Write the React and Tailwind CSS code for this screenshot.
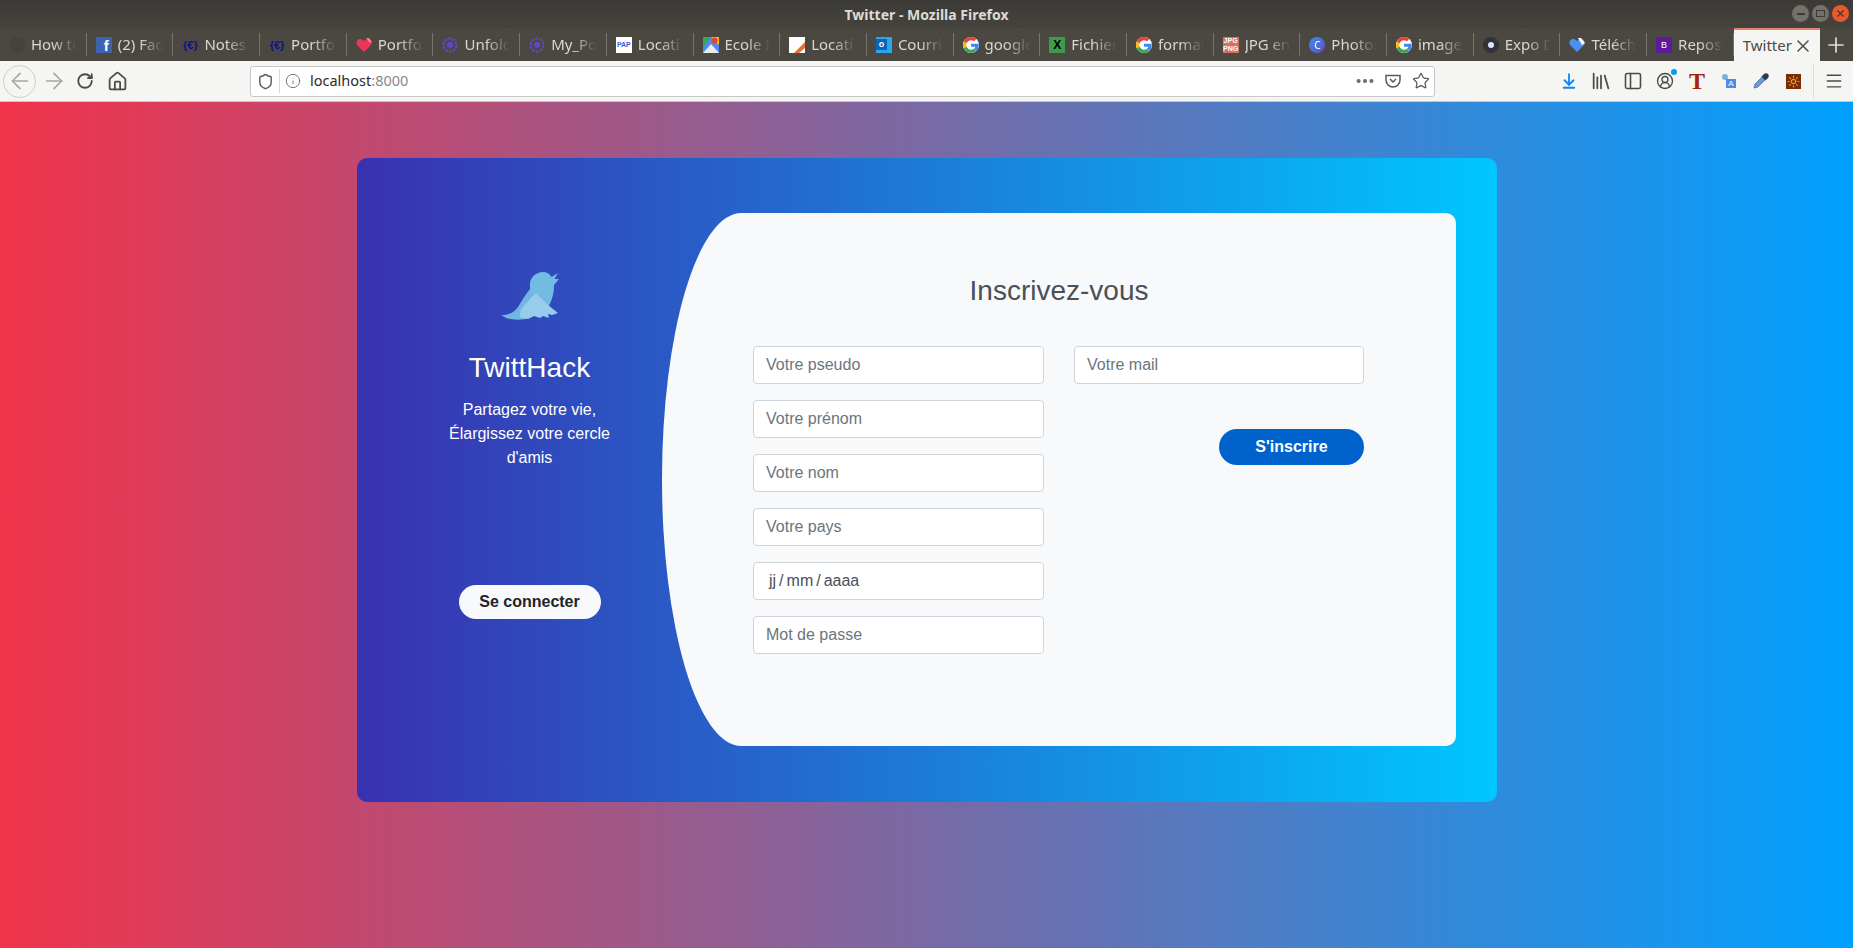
import React from 'react';
import {
  ArrowLeft, ArrowRight, RotateCw, Home, Shield, Info, MoreHorizontal, Star,
  ArrowDownToLine, PanelLeft, CircleUserRound, Menu, Library, X, Plus, Sun,
} from 'lucide-react';

const Favicon = ({ kind }) => {
  if (kind === 'none') return <div className="w-4 h-4 rounded-full bg-[#45433e]" />;
  if (kind === 'fb') return <div className="w-4 h-4 bg-[#3b63b0] flex items-end justify-end pr-[3px] text-white font-bold text-[15px] leading-[14px] [font-family:'Liberation_Sans',sans-serif]">f</div>;
  if (kind === 'code') return <div className="w-4 h-4 text-[#10108a] font-bold text-[11px] leading-4 text-center [font-family:'Liberation_Sans',sans-serif]">{'{€}'}</div>;
  if (kind === 'heart') return <svg viewBox="0 0 16 16" className="w-4 h-4"><path d="M8 15 1 8C-.5 5.5 1 2 4 2c2 0 3 1 4 2 1-1 2-2 4-2 3 0 4.500 3.500 3 6z" fill="#e8375a" /><path d="M10 1h3l3 4-2 1z" fill="#f2808f" /></svg>;
  if (kind === 'unfold') return <svg viewBox="0 0 16 16" className="w-4 h-4"><circle cx="8" cy="8" r="6.500" fill="none" stroke="#5b48c8" strokeWidth="2" strokeDasharray="3 1" /><circle cx="8" cy="8" r="3" fill="#5b48c8" /></svg>;
  if (kind === 'pap') return <div className="w-4 h-4 bg-white text-[#3b5be0] font-bold text-[7px] leading-4 text-center [font-family:'Liberation_Sans',sans-serif]">PAP</div>;
  if (kind === 'maps') return <svg viewBox="0 0 16 16" className="w-4 h-4"><rect width="16" height="16" fill="#4c8bf5" /><path d="M0 0h8L0 10z" fill="#34a853" /><path d="M8 0h8v8z" fill="#fbbc04" /><path d="M0 16 8 7l8 9z" fill="#e8eaed" /><circle cx="11.500" cy="3.500" r="3" fill="#ea4335" /></svg>;
  if (kind === 'loc') return <svg viewBox="0 0 16 16" className="w-4 h-4"><rect width="16" height="16" fill="#fff" /><path d="M16 5v6l-6 5H5z" fill="#e8702a" /></svg>;
  if (kind === 'outlook') return <div className="w-4 h-4 bg-[#28a8ea] flex items-center"><div className="w-[11px] h-[11px] bg-[#0f62b4] text-white font-bold text-[9px] leading-[11px] text-center [font-family:'Liberation_Sans',sans-serif]">o</div></div>;
  if (kind === 'google') return <svg viewBox="0 0 48 48" className="w-4 h-4"><circle cx="24" cy="24" r="24" fill="#fff" /><path fill="#EA4335" d="M24 9.500c3.500 0 6.700 1.300 9.100 3.500l6.800-6.800C35.800 2.400 30.300 0 24 0 14.600 0 6.500 5.400 2.600 13.200l7.900 6.100C12.400 13.700 17.700 9.500 24 9.500z" /><path fill="#4285F4" d="M47 24.500c0-1.600-.1-3.100-.4-4.500H24v9h12.900c-.6 3-2.200 5.500-4.700 7.200l7.700 6C44.400 37.900 47 31.800 47 24.500z" /><path fill="#FBBC05" d="M10.500 28.700c-.5-1.500-.8-3-.8-4.700s.3-3.200.8-4.700l-7.900-6.100C.9 16.500 0 20.100 0 24s.9 7.500 2.600 10.800z" /><path fill="#34A853" d="M24 48c6.500 0 11.900-2.100 15.900-5.800l-7.700-6c-2.100 1.400-4.900 2.300-8.200 2.300-6.300 0-11.600-4.200-13.500-9.800l-7.900 6.100C6.500 42.600 14.600 48 24 48z" /></svg>;
  if (kind === 'excel') return <div className="w-4 h-4 bg-[#3f9a4a] text-black font-bold text-[12px] leading-4 text-center [font-family:'Liberation_Sans',sans-serif]">X</div>;
  if (kind === 'jpg') return <div className="w-4 h-4 bg-[#d9705f] text-white font-bold text-[7px] leading-[8px] text-center [font-family:'Liberation_Sans',sans-serif]">JPG<br />PNG</div>;
  if (kind === 'photo') return <div className="w-4 h-4 rounded-full bg-gradient-to-br from-[#2f8fe0] to-[#5a4ad0] text-white text-[10px] leading-4 text-center">C</div>;
  if (kind === 'expo') return <div className="w-4 h-4 rounded-full bg-[#33313a] flex items-center justify-center"><div className="w-[6px] h-[6px] rounded-full bg-[#dfe2ff]" /></div>;
  if (kind === 'tele') return <svg viewBox="0 0 16 16" className="w-4 h-4"><path d="M8 15 1 8C-.5 5.500 1 2 4 2c2 0 3 1 4 2 1-1 2-2 4-2 3 0 4.500 3.500 3 6z" fill="#4a90f0" /><path d="M9 1h3l4 5-3 2z" fill="#fff" /></svg>;
  return <div className="w-4 h-4 bg-[#5c1a9c] text-white text-[9px] leading-4 text-center [font-family:'Liberation_Sans',sans-serif]">B</div>;
};

const tabs = [
  ['none', 'How to'], ['fb', '(2) Fac'], ['code', 'Notes'], ['code', 'Portfo'], ['heart', 'Portfo'],
  ['unfold', 'Unfold'], ['unfold', 'My_Po'], ['pap', 'Locati'], ['maps', 'Ecole I'], ['loc', 'Locati'],
  ['outlook', 'Courri'], ['google', 'google'], ['excel', 'Fichier'], ['google', 'format'], ['jpg', 'JPG en'],
  ['photo', 'Photos'], ['google', 'image'], ['expo', 'Expo D'], ['tele', 'Téléch'], ['boot', 'Reposi'],
];

const fields = ['Votre pseudo', 'Votre prénom', 'Votre nom', 'Votre pays', 'date', 'Mot de passe'];

const Field = ({ label }) => (
  <div className="h-[38px] w-full bg-white border border-[#ced4da] rounded-[4px] flex items-center px-[12px] text-[16px]">
    {label === 'date' ? (
      <span className="text-[#495057] pl-[3px] flex">
        <span>jj</span><span className="mx-[3px]">/</span><span>mm</span><span className="mx-[3px]">/</span><span>aaaa</span>
      </span>
    ) : (
      <span className="text-[#6c757d]">{label}</span>
    )}
  </div>
);

const ToolCell = ({ children }) => <div className="w-8 flex items-center justify-center">{children}</div>;

export default function App() {
  return (
    <div className="h-[948px] flex flex-col overflow-hidden [font-family:'Liberation_Sans',sans-serif]">
      {/* Window chrome */}
      <div className="h-[28px] bg-gradient-to-b from-[#3b3a36] to-[#45433e] relative flex items-center justify-center">
        <span className="text-[#dedbd4] text-[14px] font-bold [font-family:'Noto_Sans',sans-serif]">Twitter - Mozilla Firefox</span>
        <div className="absolute right-[4px] top-[5px] flex gap-[3px]">
          <div className="w-[17px] h-[17px] rounded-full bg-[#74716a] flex items-center justify-center"><div className="w-[8px] h-[2px] bg-[#3c3b37]" /></div>
          <div className="w-[17px] h-[17px] rounded-full bg-[#74716a] flex items-center justify-center"><div className="w-[9px] h-[7px] border border-[#3c3b37]" /></div>
          <div className="w-[17px] h-[17px] rounded-full bg-[#e9592c] flex items-center justify-center"><X size={11} strokeWidth={2.500} className="text-[#3c3b37]" /></div>
        </div>
      </div>
      <div className="h-[33px] bg-[#4b4841] flex items-stretch">
        {tabs.map(([icon, title], i) => (
          <div key={i} className="w-[86.700px] shrink-0 flex items-center pl-[9px] gap-[6px] border-r border-[#77746c] my-[5px] overflow-hidden text-[#dad7d0] text-[15px] [font-family:'Noto_Sans',sans-serif]">
            <div className="shrink-0"><Favicon kind={icon} /></div>
            <span className="whitespace-nowrap w-[48px] overflow-hidden [mask-image:linear-gradient(to_right,black_45%,transparent_95%)]">{title}</span>
          </div>
        ))}
        <div className="w-[86px] shrink-0 bg-[#f5f5f3] border-t-[2px] border-[#e8836a] flex items-center pl-[9px] text-[#4a4a46] text-[15px] [font-family:'Noto_Sans',sans-serif]">
          <span>Twitter</span>
          <X size={20} strokeWidth={1.800} className="ml-auto mr-[7px]" />
        </div>
        <div className="flex-1 flex items-center justify-center text-[#e0ddd6]"><Plus size={24} strokeWidth={1.700} /></div>
      </div>
      {/* Nav bar */}
      <div className="h-[41px] bg-[#f5f5f3] border-b border-[#c8c8c6] flex items-center text-[#4a4a48]">
        <div className="w-[33px] h-[33px] ml-[3px] shrink-0 rounded-full border border-[#cfcfcd] flex items-center justify-center text-[#a6a6a4]"><ArrowLeft size={26} strokeWidth={1.500} /></div>
        <ArrowRight size={26} strokeWidth={1.500} className="ml-[4.500px] shrink-0 text-[#a6a6a4]" />
        <RotateCw size={18} strokeWidth={2.400} className="ml-[9.500px] shrink-0" />
        <Home size={21} strokeWidth={2} className="ml-[12.500px] shrink-0" />
        <div className="ml-[122.500px] w-[1185px] shrink-0 h-[31px] bg-white border border-[#c8c8c6] rounded-[3px] flex items-center pl-[6px] pr-[4px] text-[#5a5a58]">
          <Shield size={17} strokeWidth={2} />
          <div className="w-px h-[24px] bg-[#d8d8d6] ml-[5px]" />
          <Info size={16} strokeWidth={1.500} className="ml-[5px] text-[#777775]" />
          <span className="ml-[9px] text-[14.500px] text-[#2a2a2a] [font-family:'Noto_Sans',sans-serif]">localhost<span className="text-[#8a8a8a]">:8000</span></span>
          <div className="flex-1" />
          <MoreHorizontal size={22} strokeWidth={2.500} className="text-[#6a6a68]" />
          <svg viewBox="0 0 16 16" className="w-4 h-4 ml-[9px]" fill="none" stroke="currentColor" strokeWidth="1.500"><path d="M1 2.500h14V7a7 7 0 0 1-14 0z" /><path d="m5 6 3 3 3-3" /></svg>
          <Star size={18} strokeWidth={1.700} className="ml-[11px]" />
        </div>
        <div className="flex-1" />
        <div className="flex items-center pr-[3px]">
          <ToolCell><ArrowDownToLine size={18} strokeWidth={2.400} className="text-[#0a84ff]" /></ToolCell>
          <ToolCell><Library size={22} strokeWidth={1.900} /></ToolCell>
          <ToolCell><PanelLeft size={20} strokeWidth={1.900} /></ToolCell>
          <ToolCell>
            <div className="relative"><CircleUserRound size={18} strokeWidth={1.800} /><div className="absolute -right-[3px] -top-[3px] w-[6px] h-[6px] rounded-full bg-[#0a9be8]" /></div>
          </ToolCell>
          <ToolCell><span className="text-[#a8200f] text-[24px] leading-4 font-bold [font-family:'Liberation_Serif',serif]">T</span></ToolCell>
          <ToolCell>
            <div className="w-[14px] h-[14px] relative text-white [font-family:'Liberation_Sans',sans-serif]">
              <div className="absolute left-0 top-0 w-[6px] h-[6px] rounded-sm bg-[#7fb0d8]" />
              <div className="absolute right-0 bottom-0 w-[10px] h-[9px] bg-[#4a8ce8] text-center text-[8px] leading-[9px]">A</div>
            </div>
          </ToolCell>
          <ToolCell>
            <svg viewBox="0 0 16 16" className="w-4 h-4">
              <path d="M1 15 2 11 9 4l3 3-7 7z" fill="#6f9ad8" stroke="#4a6fa8" strokeWidth=".8" />
              <path d="M8.500 3.500 11 1c1-1 3-1 4 0s1 3 0 4l-2.500 2.500z" fill="#2e3a4a" />
            </svg>
          </ToolCell>
          <ToolCell><div className="w-[15px] h-[15px] bg-[#7a2c08] flex items-center justify-center"><Sun size={13} strokeWidth={2.200} className="text-[#f09a20]" /></div></ToolCell>
          <div className="w-px h-[34px] bg-[#dcdcda] ml-[4px]" />
          <div className="ml-[4px]"><ToolCell><Menu size={20} strokeWidth={1.700} /></ToolCell></div>
        </div>
      </div>

      {/* Page */}
      <div className="flex-1 bg-[linear-gradient(to_right,#f1334b,#00a0ff)] pt-[56px] pl-[357px]">
        <div className="w-[1140px] h-[644px] rounded-[10px] bg-[linear-gradient(to_right,#3931af,#00c6ff)] flex pt-[55px]">
          <div className="w-[305px] shrink-0 flex flex-col items-center text-white pt-[59px] pl-[40px]">
            <svg viewBox="0 12 58 48" className="w-[58px] h-[48px]">
              <path d="M29 23c1-6 6-11 13-11 4 0 7 2 8.500 5L57 13l-3.500 6H58l-5 6c0 8-2 16-6 22l-13-8c-2-1-4-2-5-4 0-4 0-8 0-12z" fill="#74bbe2" />
              <path d="M0 55c7 0 13-2 17-8 3-5 7-12 12-18l4 8-8 22c-6 1-11 1-15 0-4 0-7-2-10-4z" fill="#70b6e0" />
              <path d="M35 33 47 45l10 8-6 2-4-1 1 4-6-2-3 2-6-2-6 3-7-1c-2-3-1-7 1-10 5-5 9-11 14-15z" fill="#97cceb" />
            </svg>
            <div className="mt-[31px] text-[28px] leading-[34px]">TwittHack</div>
            <div className="mt-[13px] w-[170px] text-center text-[16px] leading-[24px]">Partagez votre vie, Élargissez votre cercle d'amis</div>
            <button className="mt-[115px] w-[142px] h-[34px] rounded-full bg-[#f8f9fa] text-[#212529] font-bold text-[16px]">Se connecter</button>
          </div>
          <div className="w-[794px] h-[533px] bg-[#f8f9fa] rounded-[10%_10px_10px_10%/50%_10px_10px_50%] flex flex-col">
            <h3 className="mt-[61px] text-center text-[#495057] text-[28px] leading-[34px]">Inscrivez-vous</h3>
            <div className="mt-[38px] pl-[91px] flex gap-[30px]">
              <div className="w-[291px] flex flex-col gap-[16px]">
                {fields.map(f => <Field key={f} label={f} />)}
              </div>
              <div className="w-[290px] flex flex-col items-end">
                <Field label="Votre mail" />
                <button className="mt-[45px] w-[145px] h-[36px] rounded-full bg-[#0062cc] text-white font-bold text-[16px]">S'inscrire</button>
              </div>
            </div>
          </div>
        </div>
      </div>
    </div>
  );
}
